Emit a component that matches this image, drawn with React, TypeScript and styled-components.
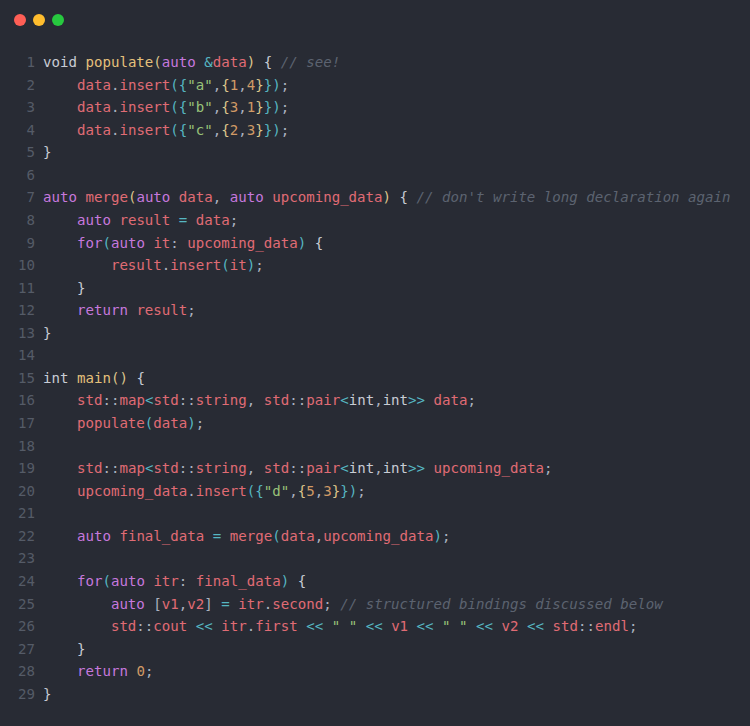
import React from "react";
import styled, { createGlobalStyle } from "styled-components";

const GlobalStyle = createGlobalStyle`
  html, body { margin: 0; padding: 0; background: #282b34; }
`;

const Window = styled.div`
  width: 750px;
  min-height: 726px;
  background: #282b34;
  display: flex;
  flex-direction: column;
  box-sizing: border-box;
`;

const TitleBar = styled.div`
  display: flex;
  gap: 7px;
  padding: 14px 0 0 14px;
`;

const Dot = styled.span<{ $color: string }>`
  width: 12px;
  height: 12px;
  border-radius: 50%;
  background: ${(p) => p.$color};
`;

const Code = styled.div`
  padding: 25px 0 0 7px;
  font-family: "DejaVu Sans Mono", "Liberation Mono", monospace;
  font-size: 14.1px;
  line-height: 22.57px;
  color: #c8ccd4;
`;

const Row = styled.div`
  display: grid;
  grid-template-columns: 28px 1fr;
  column-gap: 8px;
  white-space: pre;
`;

const LineNo = styled.span`
  text-align: right;
  color: #555b67;
`;

type Kind = "plain" | "kw" | "fn" | "id" | "str" | "num" | "op" | "cm" | "pu" | "yl" | "tl";

const colors: Record<Kind, string> = {
  plain: "#c8ccd4",
  kw: "#c678dd",
  fn: "#e5c07b",
  id: "#e06c75",
  str: "#98c379",
  num: "#d19a66",
  op: "#56b6c2",
  cm: "#5c6370",
  pu: "#abb2bf",
  yl: "#dcc58c",
  tl: "#56b6c2",
};

const Tok = styled.span<{ $kind: Kind }>`
  color: ${(p) => colors[p.$kind]};
  font-style: ${(p) => (p.$kind === "cm" ? "italic" : "normal")};
`;

const source = [
  `void populate(auto &data) { // see!`,
  `    data.insert({"a",{1,4}});`,
  `    data.insert({"b",{3,1}});`,
  `    data.insert({"c",{2,3}});`,
  `}`,
  ``,
  `auto merge(auto data, auto upcoming_data) { // don't write long declaration again`,
  `    auto result = data;`,
  `    for(auto it: upcoming_data) {`,
  `        result.insert(it);`,
  `    }`,
  `    return result;`,
  `}`,
  ``,
  `int main() {`,
  `    std::map<std::string, std::pair<int,int>> data;`,
  `    populate(data);`,
  ``,
  `    std::map<std::string, std::pair<int,int>> upcoming_data;`,
  `    upcoming_data.insert({"d",{5,3}});`,
  ``,
  `    auto final_data = merge(data,upcoming_data);`,
  ``,
  `    for(auto itr: final_data) {`,
  `        auto [v1,v2] = itr.second; // structured bindings discussed below`,
  `        std::cout << itr.first << " " << v1 << " " << v2 << std::endl;`,
  `    }`,
  `    return 0;`,
  `}`,
];

type Token = { kind: Kind; text: string };

const keywords = new Set(["auto", "for", "return"]);
const types = new Set(["void", "int"]);

function tokenize(lines: string[]): Token[][] {
  const stack: ("p" | "b" | "bp" | "bb")[] = [];
  const re = /(\/\/.*$)|("[^"]*")|(\d+)|([A-Za-z_][A-Za-z0-9_]*)|(<<|>>|::|[<>=&])|([(){}\[\]])|(\s+)|(.)/g;
  return lines.map((line) => {
    const out: Token[] = [];
    let m: RegExpExecArray | null;
    re.lastIndex = 0;
    let prevWord = "";
    while ((m = re.exec(line)) !== null) {
      const t = m[0];
      if (m[1]) out.push({ kind: "cm", text: t });
      else if (m[2]) out.push({ kind: "str", text: t });
      else if (m[3]) out.push({ kind: "num", text: t });
      else if (m[4]) {
        let kind: Kind = "id";
        if (keywords.has(t)) kind = "kw";
        else if (types.has(t)) kind = "plain";
        else if ((prevWord === "void" || prevWord === "int") && stack.length === 0) kind = "fn";
        out.push({ kind, text: t });
        prevWord = t;
        continue;
      } else if (m[5]) out.push({ kind: t === "::" ? "pu" : "op", text: t });
      else if (m[6]) {
        if (t === "(") {
          out.push({ kind: stack.length === 0 ? "yl" : "tl", text: t });
          stack.push("p");
        } else if (t === ")") {
          stack.pop();
          out.push({ kind: stack.length === 0 ? "yl" : "tl", text: t });
        } else if (t === "{") {
          const top = stack[stack.length - 1];
          if (top === "p") {
            out.push({ kind: "tl", text: t });
            stack.push("bp");
          } else if (top === "bp" || top === "bb") {
            out.push({ kind: "yl", text: t });
            stack.push("bb");
          } else {
            out.push({ kind: "plain", text: t });
            stack.push("b");
          }
        } else if (t === "}") {
          const top = stack.pop();
          out.push({ kind: top === "bp" ? "tl" : top === "bb" ? "yl" : "plain", text: t });
        } else out.push({ kind: "pu", text: t });
      } else if (m[7]) {
        out.push({ kind: "plain", text: t });
        continue;
      } else out.push({ kind: "pu", text: t });
      prevWord = "";
    }
    return out;
  });
}

const tokens = tokenize(source);

export default function App() {
  return (
    <>
      <GlobalStyle />
      <Window>
        <TitleBar>
          <Dot $color="#ff5f56" />
          <Dot $color="#ffbd2e" />
          <Dot $color="#27c93f" />
        </TitleBar>
        <Code>
          {tokens.map((line, i) => (
            <Row key={i}>
              <LineNo>{i + 1}</LineNo>
              <span>
                {line.map((tk, j) => (
                  <Tok key={j} $kind={tk.kind}>
                    {tk.text}
                  </Tok>
                ))}
              </span>
            </Row>
          ))}
        </Code>
      </Window>
    </>
  );
}
